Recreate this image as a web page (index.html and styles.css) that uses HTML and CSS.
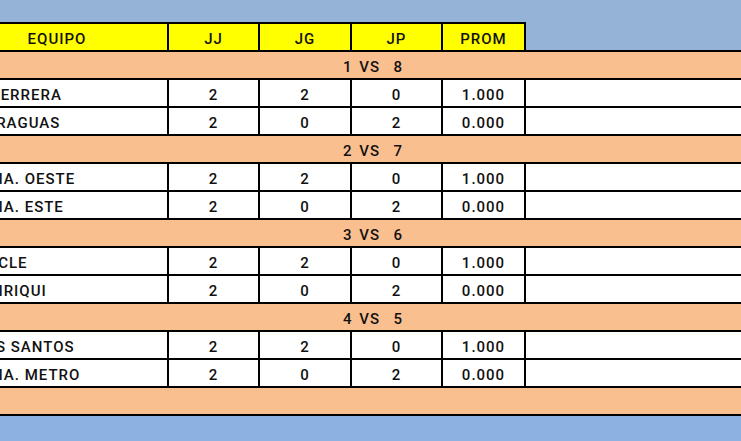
FILE: index.html
```html
<!DOCTYPE html>
<html lang="es">
<head>
<meta charset="utf-8">
<title>Serie</title>
<link rel="stylesheet" href="styles.css">
</head>
<body>
<div class="page">
  <table class="sheet">
    <colgroup>
      <col class="c-team"><col class="c-jj"><col class="c-jg"><col class="c-jp"><col class="c-prom"><col class="c-rest">
    </colgroup>
    <thead>
      <tr class="head">
        <th>EQUIPO</th><th>JJ</th><th>JG</th><th>JP</th><th>PROM</th><th class="blank"></th>
      </tr>
    </thead>
    <tbody>
      <tr class="vs"><td colspan="6">1 VS  8</td></tr>
      <tr><td class="team ind">HERRERA</td><td>2</td><td>2</td><td>0</td><td>1.000</td><td></td></tr>
      <tr><td class="team">VERAGUAS</td><td>2</td><td>0</td><td>2</td><td>0.000</td><td></td></tr>
      <tr class="vs"><td colspan="6">2 VS  7</td></tr>
      <tr><td class="team ind-sm">PMA. OESTE</td><td>2</td><td>2</td><td>0</td><td>1.000</td><td></td></tr>
      <tr><td class="team ind-sm">PMA. ESTE</td><td>2</td><td>0</td><td>2</td><td>0.000</td><td></td></tr>
      <tr class="vs"><td colspan="6">3 VS  6</td></tr>
      <tr><td class="team">COCLE</td><td>2</td><td>2</td><td>0</td><td>1.000</td><td></td></tr>
      <tr><td class="team">CHIRIQUI</td><td>2</td><td>0</td><td>2</td><td>0.000</td><td></td></tr>
      <tr class="vs"><td colspan="6">4 VS  5</td></tr>
      <tr><td class="team">LOS SANTOS</td><td>2</td><td>2</td><td>0</td><td>1.000</td><td></td></tr>
      <tr><td class="team ind-sm">PMA. METRO</td><td>2</td><td>0</td><td>2</td><td>0.000</td><td></td></tr>
      <tr class="vs"><td colspan="6"></td></tr>
    </tbody>
  </table>
  <div class="floor"></div>
</div>
</body>
</html>
```

FILE: styles.css
```css
html, body {
  margin: 0;
  padding: 0;
  overflow: hidden;
}
body {
  background: #95b3d7;
  font-family: Roboto, "Liberation Sans", sans-serif;
  font-size: 15px;
  font-weight: 500;
  letter-spacing: 1px;
  color: #111;
}
.page {
  display: flex;
  flex-direction: column;
  height: 100vh;
  padding-top: 22px;
  box-sizing: border-box;
}
.sheet {
  border-collapse: collapse;
  table-layout: fixed;
  width: 854px;
  margin-left: -55px;
  flex: none;
}
.c-team { width: 222px; }
.c-jj { width: 91px; }
.c-jg { width: 92px; }
.c-jp { width: 91px; }
.c-prom { width: 83px; }
.c-rest { width: 275px; }

.sheet th,
.sheet td {
  height: 28px;
  padding: 4px 0 0;
  border: 2px solid #000;
  text-align: center;
  vertical-align: middle;
  white-space: nowrap;
  overflow: hidden;
  font-weight: 500;
  box-sizing: border-box;
}
.head th {
  background: #ffff00;
}
.head th.blank {
  background: transparent;
  border-top: none;
  border-right: none;
}
tbody td {
  background: #fff;
}
.vs td {
  background: #fabf8f;
  white-space: pre;
  word-spacing: 2px;
}
.sheet td.team {
  text-align: left;
  padding-left: 29px;
}
.sheet td.ind-sm {
  padding-left: 32px;
}
.sheet td.ind {
  padding-left: 42px;
}
.floor {
  flex: 1;
  background: #8db1e0;
}
```
